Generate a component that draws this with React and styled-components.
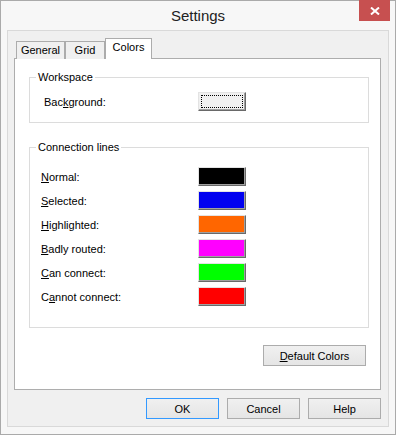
// IMPORT REACT
import React from 'react'

// IMPORT STYLED COMPONENTS
import styled, { createGlobalStyle } from 'styled-components'

// GLOBAL
const GlobalStyle = createGlobalStyle`
    html, body {
        margin: 0;
        padding: 0;
        background: #ffffff;
    }
    body {
        font-family: "Liberation Sans", Arial, sans-serif;
        font-size: 11px;
        color: #000000;
    }
    * {
        box-sizing: border-box;
    }
`

// STYLED
const Window = styled.div`
    width: 396px;
    height: 435px;
    border: 1px solid #aaaaaa;
    background: #f7f7f7;
    display: flex;
    flex-direction: column;
`
const TitleBar = styled.div`
    height: 29px;
    display: grid;
    grid-template-columns: 1fr auto 1fr;
    align-items: start;
`
const Title = styled.div`
    grid-column: 2;
    line-height: 29px;
    font-size: 15px;
    color: #222222;
`
const CloseButton = styled.div`
    grid-column: 3;
    justify-self: end;
    width: 31px;
    height: 21px;
    margin: -1px 5px 0 0;
    background: #c75050;
    display: flex;
    align-items: center;
    justify-content: center;
`
const Client = styled.div`
    height: 397px;
    margin: 0 6px 7px 6px;
    padding: 7px 7px 0 6px;
    border: 1px solid #d9d9d9;
    background: #f0f0f0;
    display: flex;
    flex-direction: column;
`
const TabRow = styled.div`
    height: 21px;
    padding-left: 2px;
    display: flex;
    align-items: flex-end;
`
const Tab = styled.div`
    position: relative;
    z-index: ${p => (p.active ? 1 : 0)};
    width: ${p => p.w}px;
    height: ${p => (p.active ? 21 : 18)}px;
    border: 1px solid #acacac;
    border-bottom: none;
    background: ${p => (p.active ? '#ffffff' : '#f0f0f0')};
    text-align: center;
    line-height: 17px;
`
const Panel = styled.div`
    height: 332px;
    margin-top: -1px;
    padding: 11px 11px 0 14px;
    border: 1px solid #adadad;
    background: #ffffff;
    display: flex;
    flex-direction: column;
`
const GroupBox = styled.fieldset`
    margin: ${p => p.mt || 0}px 0 0 0;
    padding: ${p => p.pt}px 0 ${p => p.pb}px 0;
    border: 1px solid #dcdcdc;
    min-width: 0;
`
const Legend = styled.legend`
    margin-left: 6px;
    padding: 0 2px;
    line-height: 14px;
`
const Rows = styled.div`
    display: flex;
    flex-direction: column;
    gap: 5px;
`
const Row = styled.div`
    display: grid;
    grid-template-columns: ${p => p.labelW}px 48px;
    align-items: center;
    padding-left: ${p => p.indent}px;
`
const Key = styled.span`
    text-decoration: underline;
`
const ColorButton = styled.button`
    width: 48px;
    height: 19px;
    padding: 0;
    border: 1px solid;
    border-color: #e3e3e3 #696969 #696969 #e3e3e3;
    box-shadow: inset -1px -1px 0 #a0a0a0;
    background: ${p => p.color};
    outline: ${p => (p.focused ? '1px dotted #000000' : 'none')};
    outline-offset: -4px;
`
const ButtonRow = styled.div`
    display: flex;
    justify-content: flex-end;
    gap: ${p => p.gap || 0}px;
    margin-top: ${p => p.mt}px;
    padding-right: ${p => p.pr || 0}px;
`
const PushButton = styled.button`
    width: ${p => p.w}px;
    height: 21px;
    padding: 0;
    border: 1px solid ${p => (p.primary ? '#3399ff' : '#acacac')};
    background: linear-gradient(#f0f0f0, #e5e5e5);
    font: inherit;
    color: #000000;
`

const lines = [
    { pre: '', key: 'N', post: 'ormal:', color: '#000000' },
    { pre: '', key: 'S', post: 'elected:', color: '#0000f0' },
    { pre: '', key: 'H', post: 'ighlighted:', color: '#ff6600' },
    { pre: '', key: 'B', post: 'adly routed:', color: '#ff00ff' },
    { pre: '', key: 'C', post: 'an connect:', color: '#00ff00' },
    { pre: 'C', key: 'a', post: 'nnot connect:', color: '#ff0000' },
]

const App = () => {
    return (
        <>
            <GlobalStyle />
            <Window>
                <TitleBar>
                    <Title>Settings</Title>
                    <CloseButton>
                        <svg width="10" height="8" viewBox="0 0 10 8">
                            <path d="M1 0.5 L9 7.5 M9 0.5 L1 7.5" stroke="#ffffff" strokeWidth="2" />
                        </svg>
                    </CloseButton>
                </TitleBar>
                <Client>
                    <TabRow>
                        <Tab w={49}>General</Tab>
                        <Tab w={40}>Grid</Tab>
                        <Tab w={47} active>Colors</Tab>
                    </TabRow>
                    <Panel>
                        <GroupBox pt={8} pb={11}>
                            <Legend>Workspace</Legend>
                            <Row labelW={154} indent={14}>
                                <span>Bac<Key>k</Key>ground:</span>
                                <ColorButton color="#f0f0f0" focused />
                            </Row>
                        </GroupBox>
                        <GroupBox mt={17} pt={13} pb={21}>
                            <Legend>Connection lines</Legend>
                            <Rows>
                                {lines.map(l => (
                                    <Row key={l.post} labelW={157} indent={11}>
                                        <span>{l.pre}<Key>{l.key}</Key>{l.post}</span>
                                        <ColorButton color={l.color} />
                                    </Row>
                                ))}
                            </Rows>
                        </GroupBox>
                        <ButtonRow mt={17} pr={3}>
                            <PushButton w={103}><Key>D</Key>efault Colors</PushButton>
                        </ButtonRow>
                    </Panel>
                    <ButtonRow mt={8} gap={8}>
                        <PushButton w={73} primary>OK</PushButton>
                        <PushButton w={73}>Cancel</PushButton>
                        <PushButton w={73}>Help</PushButton>
                    </ButtonRow>
                </Client>
            </Window>
        </>
    )
}

export default App
